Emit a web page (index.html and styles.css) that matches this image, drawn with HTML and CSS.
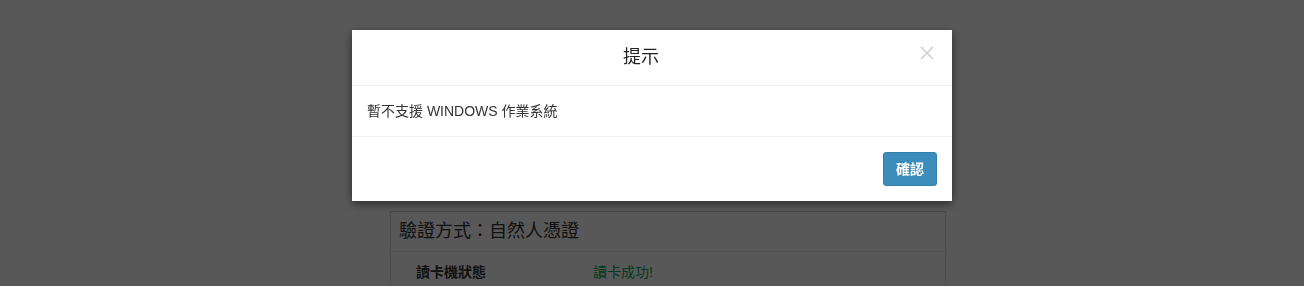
FILE: index.html
```html
<!DOCTYPE html>
<html lang="zh-Hant">
<head>
  <meta charset="UTF-8">
  <title>提示</title>
  <link rel="stylesheet" href="styles.css">
</head>
<body>
  <div class="page">
    <div class="panel">
      <div class="panel-heading">驗證方式：自然人憑證</div>
      <div class="panel-body">
        <div class="row">
          <span class="row-label">讀卡機狀態</span>
          <span class="row-value ok">讀卡成功!</span>
        </div>
      </div>
    </div>
  </div>

  <div class="backdrop"></div>

  <div class="modal">
    <div class="modal-header">
      <h4 class="modal-title">提示</h4>
      <button class="close" type="button" aria-label="Close">
        <svg width="14" height="14" viewBox="0 0 14 14">
          <path d="M1 1 L13 13 M13 1 L1 13" stroke="#cfcfcf" stroke-width="1.6" fill="none"/>
        </svg>
      </button>
    </div>
    <div class="modal-body">暫不支援 WINDOWS 作業系統</div>
    <div class="modal-footer">
      <button class="btn-primary" type="button">確認</button>
    </div>
  </div>
</body>
</html>
```

FILE: styles.css
```css
html, body { margin: 0; padding: 0; }
body {
  font-family: "Liberation Sans", "Noto Sans CJK TC", sans-serif;
  font-size: 14px;
  line-height: 20px;
  color: #333;
  background: #fff;
  height: 286px;
  overflow: hidden;
}

.page { display: flex; justify-content: center; padding-top: 211px; padding-left: 32px; }
.panel {
  width: 554px;
  border: 1px solid #ddd;
  border-top-color: #c9ccd2;
  background: #fff;
  box-shadow: 0 1px 2px rgba(0,0,0,0.1);
}
.panel-heading {
  font-size: 18px;
  line-height: 26px;
  padding: 6px 8px 7px;
  border-bottom: 1px solid #f0f0f0;
  color: #333;
}
.panel-body { padding: 10px 25px; }
.row { display: flex; }
.row-label { width: 177px; font-weight: bold; }
.ok { color: #00a65a; }

.backdrop {
  position: fixed;
  inset: 0;
  background: #000;
  opacity: 0.655;
}

.modal {
  position: fixed;
  top: 30px;
  left: 50%;
  margin-left: -300px;
  width: 600px;
  background: #fff;
  box-shadow: 0 3px 9px rgba(0,0,0,0.5);
}
.modal-header {
  position: relative;
  padding: 15px 37px 15px 15px;
  border-bottom: 1px solid #f0f0f0;
  text-align: center;
}
.modal-title {
  margin: 0;
  font-size: 18px;
  font-weight: normal;
  line-height: 25px;
  color: #222;
}
.close {
  position: absolute;
  top: 16px;
  right: 18px;
  padding: 0;
  border: 0;
  background: none;
  line-height: 0;
}
.modal-body { padding: 15px; }
.modal-footer {
  padding: 15px;
  border-top: 1px solid #f0f0f0;
  display: flex;
  justify-content: flex-end;
}
.btn-primary {
  font-family: inherit;
  font-size: 14px;
  font-weight: bold;
  line-height: 20px;
  padding: 6px 12px;
  color: #fff;
  background: #3c8dbc;
  border: 1px solid #367fa9;
  border-radius: 3px;
}
```
